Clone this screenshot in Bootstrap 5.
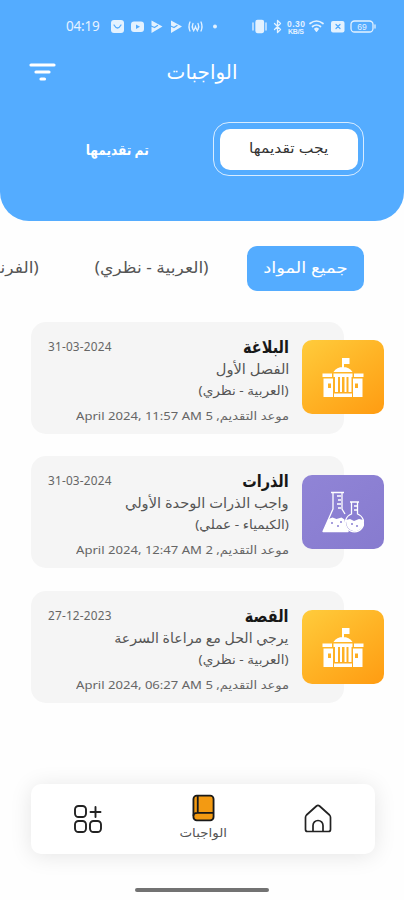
<!DOCTYPE html>
<html lang="ar" dir="rtl">
<head>
<meta charset="utf-8">
<meta name="viewport" content="width=device-width, initial-scale=1">
<title>الواجبات</title>
<link href="https://cdn.jsdelivr.net/npm/bootstrap@5.3.0/dist/css/bootstrap.min.css" rel="stylesheet">
<style>
  body { font-family: "Noto Sans", "DejaVu Sans", sans-serif; background: #fefefe; color: #555; }
  .screen { width: 404px; height: 900px; }
  .hero { height: 220.5px; background: #54acff; border-radius: 0 0 29px 29px; }
  .status-bar { height: 53px; padding: 0 0 0 66px; direction: ltr; }
  .clock { font-size: 13.5px; letter-spacing: -.2px; width: 44px; flex: none; opacity: .85; }
  .title-bar { height: 38px; padding: 0 29px; }
  .title-spacer { width: 27px; }
  .page-title { font-size: 20px; line-height: 36px; }
  .tabs { padding: 31px 40px 0; }
  .tab-ring { width: 151px; height: 54px; border: 1.5px solid #d8ecff; border-radius: 16px; padding: 5.5px; flex: none; }
  .tab-pill { border-radius: 10px; color: #333; font-size: 14px; padding-bottom: 3px; }
  .tab-idle { width: 192px; height: 50px; font-size: 14px; flex: none; }
  .subjects { height: 45px; margin-top: 25px; padding: 0 40px; font-size: 15.5px; white-space: nowrap; color: #555; }
  .chip { width: 117.5px; height: 45px; border-radius: 10px; background: #54acff; flex: none; }
  .subject-list { padding-right: 38px; gap: 56px; }
  .subject { flex: none; width: 114px; }
  .tasks { padding: 31px 20px 0 31px; gap: 22.9px; }
  .task { height: 112px; }
  .task-panel { background: #f5f5f5; border-radius: 15px; width: 313px; height: 112px; padding: 13px 55px 0 17px; }
  .tile { width: 82px; height: 74px; border-radius: 10px; right: 0; top: 18.4px; }
  .tile-gold { background: linear-gradient(145deg, #ffcc3c, #ffb325 50%, #ff9c12); }
  .tile-violet { background: linear-gradient(145deg, #9084d6, #877bcf); }
  .t-name { font-size: 17px; line-height: 23px; color: #181818; }
  .t-date { font-size: 11.800px; letter-spacing: .2px; line-height: 23px; color: #666; }
  .t-desc { font-size: 14px; line-height: 22px; white-space: nowrap; }
  .t-subj { font-size: 12.5px; line-height: 21px; }
  .t-due { font-size: 11.2px; line-height: 30px; color: #666; white-space: nowrap; }
  .dock { width: 344px; height: 70px; margin: 80.5px 29px 0 auto; border-radius: 10px; background: #fff; box-shadow: 0 2px 22px rgba(0,0,0,.1); }
  .dock-item { width: 114px; }
  .dock-label { font-size: 12px; line-height: 21px; transform: scaleX(1.12); }
  .home-line { width: 134px; height: 4px; border-radius: 2px; background: #727272; margin: 34.500px auto 0; }
  .fit { display: inline-block; transform-origin: 50% 50%; }
  .fit-start { display: inline-block; transform-origin: 100% 50%; }
  .x-tab { transform: scaleX(1.11); }
  .x-idle { transform: scaleX(.87); }
  .x-chip { transform: scaleX(1.16); }
  .x-subject { transform: scaleX(1.11); }
  .x-name { transform: scaleX(.85); }
  .x-desc { transform: scaleX(1.045); }
  .x-desc-long { transform: scaleX(1.01); }
  .x-subj { transform: scaleX(1.09); }
  .x-due { transform: scaleX(1.17); }
</style>
<script src="https://cdn.jsdelivr.net/npm/bootstrap@5.3.0/dist/js/bootstrap.bundle.min.js"></script>
</head>
<body>
<svg width="0" height="0" class="d-none">
  <symbol id="school" viewBox="0 0 42 42">
    <g fill="#fff"><path d="M20 2h7.500v6H22v4h-2zM11.500 16c2-3.500 5.500-5 9.500-5s7.500 1.500 9.500 5z"/><path d="M.5 17.500h9.500V21H.5zM32 17.500h9.500V21H32zM11.500 17.500h19V21h-19z"/><path fill-rule="evenodd" d="M1.500 22.500H11V41H1.500zm4.500 5v4.500h3v-4.500zM31 22.500h9.500V41H31zm2 5v4.500h3v-4.500z"/><path d="M13 21h3v15h-3zM18 21h2v15h-2zM22.500 21h2v15h-2zM26.500 21h3v15h-3zM12 37.500h18V41H12z"/></g>
  </symbol>
</svg>
<main class="screen d-flex flex-column overflow-hidden">
  <header class="hero text-white">
    <div class="status-bar d-flex align-items-center">
      <span class="clock">04:19</span>
      <svg class="flex-shrink-0" width="266" height="20" viewBox="110 17 266 20" fill="none" stroke="#e4f2ff" stroke-width="1.300" stroke-linecap="round" stroke-linejoin="round">
        <rect x="111" y="20" width="13" height="13" rx="3" fill="#e4f2ff" stroke="none"/><path d="M114 25q3.500 6 7 0" stroke="#54acff"/>
        <rect x="131" y="21.500" width="13" height="10.500" rx="3" fill="#e4f2ff" stroke="none"/><path d="M136 24.500v4.500l4-2.200z" fill="#54acff" stroke="none"/>
        <path d="M151.500 20.500l11 6-11 6.500zM171 20.500l11 6-11 6.500z" fill="#e4f2ff" stroke="none"/><path d="M151 26l3.500 1.500 3-2M170.500 26l3.500 1.500 3-2" stroke="#54acff"/>
        <path d="M190 22q-2 4.500 0 9M193 23.500q-1.500 3 0 6M201 22q2 4.500 0 9M198 23.500q1.500 3 0 6M195.500 26v2M193.500 31l2-4 2 4"/>
        <circle cx="215" cy="26.500" r="1.300" fill="#e4f2ff"/>
        <rect x="256" y="20.500" width="7.500" height="12" rx="1.500" fill="#e4f2ff"/><path d="M253 23v7M266 23v7"/>
        <path d="M274.500 23.500l6 6-3 3v-12l3 3-6 6"/>
        <g fill="#e4f2ff" stroke="none" font-family="Liberation Sans" font-weight="700" text-anchor="middle"><text x="296" y="26.500" font-size="8.500" textLength="18">0.30</text><text x="296" y="33.500" font-size="7" textLength="16">KB/S</text></g>
        <path d="M310 23.500q6.500-5 13 0M312.500 26.500q4-3 8 0M315 29q1.500-1.200 3 0L316.500 31z" stroke-width="1.700"/>
        <rect x="331" y="21" width="13.500" height="11.500" rx="2" fill="#e4f2ff" stroke="none"/><path d="M336 24.500l4 4m0-4l-4 4" stroke="#54acff"/>
        <rect x="351" y="21" width="22" height="11" rx="3.500"/><path d="M375 25v3"/><text x="362" y="29.600" font-size="8.500" text-anchor="middle" fill="#e4f2ff" stroke="none" font-family="Liberation Sans">69</text>
      </svg>
    </div>
    <div class="title-bar d-flex align-items-center justify-content-between">
      <span class="title-spacer"></span>
      <h1 class="page-title fw-normal m-0">الواجبات</h1>
      <svg width="27" height="20" viewBox="0 0 27 20" stroke="#fff" stroke-width="3.200" stroke-linecap="round"><path d="M2 3h23M7 10h13M12 17h3.500"/></svg>
    </div>
    <nav class="tabs d-flex align-items-center">
      <div class="tab-ring"><div class="tab-pill bg-white h-100 d-flex align-items-center justify-content-center"><span class="fit x-tab">يجب تقديمها</span></div></div>
      <div class="tab-idle fw-bold d-flex align-items-center justify-content-center"><span class="fit x-idle">تم تقديمها</span></div>
    </nav>
  </header>
  <nav class="subjects d-flex align-items-center">
    <div class="chip text-white d-flex align-items-center justify-content-center"><span class="fit x-chip">جميع المواد</span></div>
    <div class="subject-list d-flex">
      <div class="subject"><span class="fit-start x-subject">(العربية - نظري)</span></div>
      <div class="subject"><span class="fit-start x-subject">(الفرنسية - نظري)</span></div>
    </div>
  </nav>
  <section class="tasks d-flex flex-column">
    <article class="task position-relative d-flex justify-content-end">
      <div class="task-panel">
        <div class="d-flex justify-content-between"><h2 class="t-name fw-bold m-0"><span class="fit-start x-name">البلاغة</span></h2><span class="t-date" dir="ltr">31-03-2024</span></div>
        <div class="t-desc"><span class="fit-start x-desc">الفصل الأول</span></div>
        <div class="t-subj"><span class="fit-start x-subj">(العربية - نظري)</span></div>
        <div class="t-due"><span class="fit-start x-due">موعد التقديم, 5 April 2024, 11:57 AM</span></div>
      </div>
      <div class="tile tile-gold position-absolute d-flex align-items-center justify-content-center"><svg width="42" height="42"><use href="#school"/></svg></div>
    </article>
    <article class="task position-relative d-flex justify-content-end">
      <div class="task-panel">
        <div class="d-flex justify-content-between"><h2 class="t-name fw-bold m-0"><span class="fit-start x-name">الذرات</span></h2><span class="t-date" dir="ltr">31-03-2024</span></div>
        <div class="t-desc"><span class="fit-start x-desc">واجب الذرات الوحدة الأولي</span></div>
        <div class="t-subj"><span class="fit-start x-subj">(الكيمياء - عملي)</span></div>
        <div class="t-due"><span class="fit-start x-due">موعد التقديم, 2 April 2024, 12:47 AM</span></div>
      </div>
      <div class="tile tile-violet position-absolute d-flex align-items-center justify-content-center">
        <svg width="42" height="42" viewBox="0 0 42 42" fill="none" stroke="#fff" stroke-width="1.300" stroke-linejoin="round"><path d="M9 1.500h13M11 2v16L1 40.500h25l-4-9M20 2v16l3 5M28 11h9M29.500 11v12a9.200 9.200 0 1 0 6 0V11"/><path d="M6.500 28l4-1.500 4 1.500 5-1.500 3 2 1 7 3 5H1zM24 29l4-1 4 2 5-2 4.500 1q1 10-9 11.500-9-1.500-8.500-11.500z" fill="#fff" stroke="none"/><path d="M15 5h4M16 9h3M15 13h4M16 17h3M32 15h3M32 19h3"/><g fill="#8a7fd2" stroke="none"><circle cx="10" cy="32" r="1"/><circle cx="16" cy="35" r="1"/><circle cx="19" cy="31" r="1"/><circle cx="30" cy="33" r="1"/><circle cx="35" cy="35" r="1"/></g></svg>
      </div>
    </article>
    <article class="task position-relative d-flex justify-content-end">
      <div class="task-panel">
        <div class="d-flex justify-content-between"><h2 class="t-name fw-bold m-0"><span class="fit-start x-name">القصة</span></h2><span class="t-date" dir="ltr">27-12-2023</span></div>
        <div class="t-desc"><span class="fit-start x-desc-long">يرجي الحل مع مراعاة السرعة</span></div>
        <div class="t-subj"><span class="fit-start x-subj">(العربية - نظري)</span></div>
        <div class="t-due"><span class="fit-start x-due">موعد التقديم, 5 April 2024, 06:27 AM</span></div>
      </div>
      <div class="tile tile-gold position-absolute d-flex align-items-center justify-content-center"><svg width="42" height="42"><use href="#school"/></svg></div>
    </article>
  </section>
  <nav class="dock d-flex align-items-center justify-content-around flex-shrink-0">
    <div class="dock-item text-center"><svg width="28" height="29" viewBox="0 0 28 29" fill="none" stroke="#222" stroke-width="1.700" stroke-linejoin="round"><path d="M9 27.500H3.500a2 2 0 0 1-2-2V13.500q0-1.500 1-2.500L12.500 2q1.500-1.200 3 0L25.500 11q1 1 1 2.500v12a2 2 0 0 1-2 2H9zM9 27.500V21.500a5 5 0 0 1 10 0v6"/></svg></div>
    <div class="dock-item d-flex flex-column align-items-center"><svg width="23" height="28" viewBox="0 0 24 28" stroke="#191919" stroke-width="1.900"><rect x="1.500" y="1" width="21" height="26" rx="3.500" fill="#f39a12"/><path d="M6 1v18M1.500 22q0-3 4-3h17" fill="none"/></svg><span class="dock-label">الواجبات</span></div>
    <div class="dock-item text-center"><svg width="28" height="28" viewBox="0 0 28 28" fill="none" stroke="#222" stroke-width="1.900"><rect x="1" y="1" width="11" height="11" rx="3.500"/><rect x="1" y="16" width="11" height="11" rx="3.500"/><rect x="16" y="16" width="11" height="11" rx="3.500"/><path d="M21.500 2v10M16.500 7h10" stroke-linecap="round"/></svg></div>
  </nav>
  <div class="home-line flex-shrink-0"></div>
</main>
</body>
</html>
